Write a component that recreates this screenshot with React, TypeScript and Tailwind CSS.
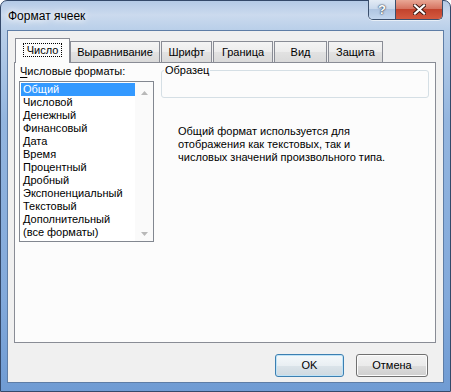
const formats = [
  "Общий",
  "Числовой",
  "Денежный",
  "Финансовый",
  "Дата",
  "Время",
  "Процентный",
  "Дробный",
  "Экспоненциальный",
  "Текстовый",
  "Дополнительный",
  "(все форматы)",
];

const tabs = [
  { label: "Выравнивание", w: "w-[90px]", ml: "ml-0" },
  { label: "Шрифт", w: "w-[51px]", ml: "ml-px" },
  { label: "Граница", w: "w-[60px]", ml: "ml-px" },
  { label: "Вид", w: "w-[53px]", ml: "ml-px" },
  { label: "Защита", w: "w-[55px]", ml: "ml-px" },
];

const CaptionButtons: React.FC = () => (
  <div className="ml-auto mr-[7px] -mt-px flex h-[20px] overflow-hidden rounded-b-[5px] border border-t-0 border-[#3b4f6c] shadow-[0_1px_0_rgba(255,255,255,0.6)]">
    <div className="w-[27px] flex items-center justify-center border-r border-[#3b4f6c] bg-[linear-gradient(#e3ebf5,#cad9ec_45%,#afc5e1_50%,#c3d6ee)]">
      <span className="text-[13px] font-bold leading-none text-white font-['Liberation_Sans',sans-serif] [text-shadow:0_0_1px_#1e2d44,0_0_2px_#1e2d44]">
        ?
      </span>
    </div>
    <div className="w-[46px] flex items-center justify-center bg-[linear-gradient(#e9a795,#d67461_45%,#c2432d_50%,#d45a40)]">
      <svg width="13" height="11" viewBox="0 0 13 11">
        <path d="M2 1.5 L11 9.5 M11 1.5 L2 9.5" stroke="#3a1710" strokeWidth="4" strokeLinecap="square" />
        <path d="M2 1.5 L11 9.5 M11 1.5 L2 9.5" stroke="#ffffff" strokeWidth="2.2" strokeLinecap="square" />
      </svg>
    </div>
  </div>
);

const WinButton: React.FC<{ label: string; width: string; primary?: boolean }> = ({ label, width, primary }) => (
  <button
    className={`${width} h-[23px] rounded-[3px] border text-[11px] text-black ${
      primary
        ? "border-[#3c7fb1] shadow-[inset_0_0_0_1px_#bfe3f7] bg-[linear-gradient(#f5f9fb,#e9eff3_50%,#dbe4ea_50%,#cfd9e0)]"
        : "border-[#707070] shadow-[inset_0_0_0_1px_#fcfcfc] bg-[linear-gradient(#f2f2f2,#ebebeb_50%,#dddddd_50%,#cfcfcf)]"
    }`}
  >
    {label}
  </button>
);

export default function App() {
  return (
    <div className="w-[451px] h-[392px] bg-white font-['Liberation_Sans',sans-serif]">
      <div className="w-[451px] h-[392px] flex flex-col rounded-t-[7px] border border-[#34496a] bg-[linear-gradient(180deg,#b4cae6_0px,#cbdaee_14px,#b9cfe9_29px,#93b5df_120px,#82a9db_300px,#6f9bd3_392px)]">
        <div className="h-[29px] flex items-start">
          <div className="pl-[7px] pt-[7px] text-[12px] leading-[16px] text-black [text-shadow:0_0_6px_#ffffff,0_0_10px_#ffffff]">
            Формат ячеек
          </div>
          <CaptionButtons />
        </div>

        <div className="mx-[6px] flex-1 flex flex-col border border-[#5e7da6] bg-[#f0f0f0] pl-[6px] pr-[7px] pt-[7px] text-[11px] leading-[13px] text-black">
          {/* tabs */}
          <div className="h-[24px] flex items-end pl-px">
            <div className="relative z-10 -mb-px h-[25px] w-[55px] flex items-center justify-center border border-b-0 border-[#898c95] bg-[#fcfcfc] pb-[2px]">
              <span className="border border-dotted border-black px-[3px] leading-[12px]">Число</span>
            </div>
            {tabs.map((t) => (
              <div
                key={t.label}
                className={`${t.w} ${t.ml} h-[21px] flex items-center justify-center border border-b-0 border-[#898c95] bg-[linear-gradient(#f4f4f4,#ececec_50%,#e2e2e2_51%,#dadada)]`}
              >
                {t.label}
              </div>
            ))}
          </div>

          {/* page */}
          <div className="h-[281px] flex border border-[#898c95] bg-[#fcfcfc]">
            <div className="w-[139px] pl-[4px] pt-[2px] flex flex-col">
              <div className="h-[13px] pl-px">
                <span className="underline underline-offset-2">Ч</span>исловые форматы:
              </div>
              <div className="mt-[3px] w-[135px] h-[161px] flex border border-[#828790] bg-white">
                <div className="w-[115px] pl-px pt-px">
                  {formats.map((f, i) => (
                    <div
                      key={f}
                      className={`h-[13px] pl-[2px] whitespace-nowrap ${i === 0 ? "bg-[#3399ff] text-white" : ""}`}
                    >
                      {f}
                    </div>
                  ))}
                </div>
                <div className="flex-1 flex flex-col items-center justify-between bg-[#fafafa] pt-[9px] pb-[5px]">
                  <svg width="7" height="4" viewBox="0 0 7 4">
                    <path d="M0 4 L3.5 0 L7 4 Z" fill="#b8b8b8" />
                  </svg>
                  <svg width="7" height="4" viewBox="0 0 7 4">
                    <path d="M0 0 L3.5 4 L7 0 Z" fill="#b8b8b8" />
                  </svg>
                </div>
              </div>
            </div>

            <div className="ml-[7px] w-[268px] flex flex-col">
              <fieldset className="mt-px h-[34px] rounded-[3px] border border-[#d5dfe5] px-px">
                <legend className="px-px ml-px">Образец</legend>
              </fieldset>
              <div className="mt-[27px] pl-[17px]">
                Общий формат используется для
                <br />
                отображения как текстовых, так и
                <br />
                числовых значений произвольного типа.
              </div>
            </div>
          </div>

          {/* buttons */}
          <div className="mt-[11px] flex justify-end gap-[12px] pr-[8px]">
            <WinButton label="OK" width="w-[69px]" primary />
            <WinButton label="Отмена" width="w-[72px]" />
          </div>
        </div>
        <div className="h-[8px]" />
      </div>
    </div>
  );
}
